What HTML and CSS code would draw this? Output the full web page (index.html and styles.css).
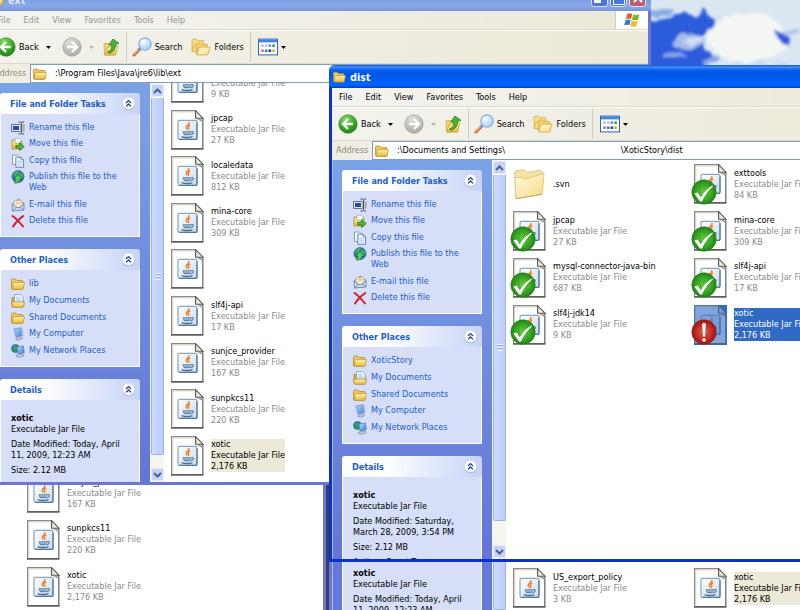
FILE: index.html
```html
<!DOCTYPE html>
<html lang="en">
<head>
<meta charset="utf-8">
<title>dist</title>
<link rel="stylesheet" href="styles.css">
</head>
<body>
<svg class="defs" aria-hidden="true">
  <defs>
    <linearGradient id="g-folder" x1="0" y1="0" x2="0" y2="1"><stop offset="0" stop-color="#fff3a8"/><stop offset="1" stop-color="#e9b93c"/></linearGradient>
    <linearGradient id="g-big" x1="0" y1="0" x2="1" y2="1"><stop offset="0" stop-color="#fffbe0"/><stop offset="1" stop-color="#f6dc84"/></linearGradient>
    <radialGradient id="g-back" cx=".4" cy=".25" r=".8"><stop offset="0" stop-color="#8fe070"/><stop offset=".5" stop-color="#3fb02c"/><stop offset="1" stop-color="#1c7d14"/></radialGradient>
    <radialGradient id="g-fwd" cx=".4" cy=".25" r=".8"><stop offset="0" stop-color="#dededc"/><stop offset="1" stop-color="#a9a9a6"/></radialGradient>
    <radialGradient id="g-ok" cx=".5" cy=".5" r=".55"><stop offset="0" stop-color="#6ecf45"/><stop offset=".6" stop-color="#38a522"/><stop offset="1" stop-color="#167a10"/></radialGradient>
    <radialGradient id="g-bad" cx=".5" cy=".5" r=".55"><stop offset="0" stop-color="#e0604a"/><stop offset=".6" stop-color="#c02a20"/><stop offset="1" stop-color="#8e1510"/></radialGradient>
    <radialGradient id="g-lens" cx=".4" cy=".35" r=".7"><stop offset="0" stop-color="#f4fbff"/><stop offset="1" stop-color="#9fccf2"/></radialGradient>
    <linearGradient id="g-java" x1="0" y1="0" x2="1" y2="1"><stop offset="0" stop-color="#ffffff"/><stop offset="1" stop-color="#c9dbe8"/></linearGradient>
    <linearGradient id="g-screen" x1="0" y1="0" x2="1" y2="1"><stop offset="0" stop-color="#bfe2ff"/><stop offset="1" stop-color="#2f7fe0"/></linearGradient>
  </defs>

  <symbol id="folder" viewBox="0 0 14 12">
    <path d="M.5 10V2.2Q.5 1 1.7 1H4.6L6 2.5H11Q12 2.5 12 3.5V10Q12 11.3 10.8 11.3H1.6Q.5 11.3.5 10Z" fill="#f0c95c" stroke="#b8902e" stroke-width=".8"/>
    <path d="M1.2 10.8 2.2 5.2Q2.4 4.4 3.2 4.4H12.6Q13.5 4.4 13.3 5.2L12.2 10.5Q12 11.3 11.2 11.3H1.7Q1.1 11.3 1.2 10.8Z" fill="url(#g-folder)" stroke="#b8902e" stroke-width=".7"/>
  </symbol>
  <symbol id="docs" viewBox="0 0 14 14">
    <path d="M1 12V3.5H4L5 5H12V12Z" fill="#e2b13a" stroke="#a67c1c" stroke-width=".7"/>
    <path d="M3.5.6H9.5L12 3V9H3.5Z" fill="#fff" stroke="#6f9ac8" stroke-width=".8"/>
    <path d="M5 3.2H9M5 5H10.5M5 6.8H10.5" stroke="#7fb0e0" stroke-width=".8"/>
    <path d="M.6 8H13.3L12.6 12.5Q12.4 13.3 11.7 13.3H2Q1.3 13.3 1.2 12.5Z" fill="url(#g-folder)" stroke="#a67c1c" stroke-width=".7"/>
  </symbol>
  <symbol id="computer" viewBox="0 0 14 14">
    <path d="M3 2 9.5.8 11 8.6 5 10Z" fill="url(#g-screen)" stroke="#6c8fc0" stroke-width=".8"/>
    <path d="M9.5.8 11.3 1.6 12 8.6 11 8.6Z" fill="#c4cede" stroke="#7d8ea8" stroke-width=".5"/>
    <path d="M5 11.2Q8 9.2 11.3 10.6V12Q8 14 5 12.8Z" fill="#c3cbe0" stroke="#7681a8" stroke-width=".6"/>
  </symbol>
  <symbol id="network" viewBox="0 0 14 14">
    <circle cx="4.5" cy="4.5" r="4" fill="#2a9a4a" stroke="#1f5a90" stroke-width=".6"/>
    <path d="M2 2.5Q4.5 1 5.5 3T3.5 6Z" fill="#3c86e0"/>
    <path d="M6 3 12.4 2 13.2 8.8 7 9.8Z" fill="url(#g-screen)" stroke="#5c7fb8" stroke-width=".8"/>
    <path d="M5.5 11.2Q9 9.2 12.8 10.6V12Q9 14 5.5 12.8Z" fill="#c3cbe0" stroke="#7681a8" stroke-width=".6"/>
  </symbol>
  <symbol id="rename" viewBox="0 0 14 14">
    <path d="M.5 3.5H9.5V10.5H.5Z" fill="#dfe7f5" stroke="#6b7280"/>
    <path d="M2 5H8V9H2Z" fill="#1f4fae"/>
    <path d="M9.4 2.5H12V11.5H9.4Z" fill="#c9ced8"/>
    <path d="M7.5 1H9.7L10.6 1.8 11.5 1H13.2M10.6 1.8V12.2M7.5 13H9.7L10.6 12.2 11.5 13H13.2" fill="none" stroke="#444b58"/>
    <path d="M12.9 3.5V10.5" stroke="#7a828f"/>
  </symbol>
  <symbol id="move" viewBox="0 0 14 14">
    <path d="M1 12V3H4.5L5.5 4.3H11V12Z" fill="url(#g-folder)" stroke="#a67c1c" stroke-width=".7"/>
    <path d="M4 1.2H8L9.8 3V6H4Z" fill="#fff" stroke="#8a93a0" stroke-width=".6"/>
    <path d="M4.8 8.4H8.6V5.8L13.2 9.6 8.6 13.4V10.9H4.8Z" fill="#4fc03a" stroke="#17701a" stroke-width=".8"/>
  </symbol>
  <symbol id="copy" viewBox="0 0 14 14">
    <path d="M1.5 1H6.5L8.5 3V10.5H1.5Z" fill="#f4faff" stroke="#6f8aa8" stroke-width=".8"/>
    <path d="M4.8 3.2H10L12.6 5.8V13.3H4.8Z" fill="#e6f3ff" stroke="#4f6f94" stroke-width=".8"/>
    <path d="M10 3.2V5.8H12.6" fill="#b8d2ec" stroke="#4f6f94" stroke-width=".6"/>
    <path d="M6.3 7.5H11M6.3 9.3H11M6.3 11.1H11" stroke="#9cc4e8" stroke-width=".7"/>
  </symbol>
  <symbol id="publish" viewBox="0 0 14 14">
    <circle cx="7" cy="6.6" r="6" fill="#2f73d0" stroke="#1c4c7c" stroke-width=".6"/>
    <path d="M2 3.5Q5 0 8 1.5L6.5 4.5 3.5 6.5ZM8.5 2.5Q12 3 12.6 6.5L10 7.5 8.3 5Z" fill="#3cb54a"/>
    <path d="M7 4.5 11.5 9H9Q9 12 5 13.4 3.2 13 2.8 12 5.5 11 5 9H2.8Z" fill="#55cf48" stroke="#146c22" stroke-width=".6"/>
  </symbol>
  <symbol id="mail" viewBox="0 0 14 14">
    <path d="M1 6 7.5 1 13 5.5V12L1.5 13Z" fill="#c9dbf3" stroke="#60789c" stroke-width=".8"/>
    <path d="M3 3 10.5 2.2 11.5 8 7 9.8 3.5 8Z" fill="#fffdf2" stroke="#b09a60" stroke-width=".6"/>
    <path d="M4.5 4.8 9.5 4.2M4.7 6.3 9.8 5.8" stroke="#e39a4a" stroke-width=".8"/>
    <path d="M1.2 6.4 7 10 13 5.8M1.5 12.8 5.6 9.2M12.9 11.8 8.6 9" fill="none" stroke="#60789c" stroke-width=".7"/>
  </symbol>
  <symbol id="delete" viewBox="0 0 14 14">
    <path d="M1.5 2Q6 5 12 12.5M12.3 2Q6 6 2 12.5" fill="none" stroke="#cf1f2c" stroke-width="2" stroke-linecap="round"/>
  </symbol>

  <symbol id="back" viewBox="0 0 20 20">
    <circle cx="10" cy="10" r="9.2" fill="url(#g-back)" stroke="#3a8a30" stroke-width=".7"/>
    <path d="M10 5 5 10 10 15M5.4 10H15" fill="none" stroke="#fff" stroke-width="2.4"/>
  </symbol>
  <symbol id="forward" viewBox="0 0 20 20">
    <circle cx="10" cy="10" r="9.2" fill="url(#g-fwd)" stroke="#a0a09c" stroke-width=".7"/>
    <path d="M10 5 15 10 10 15M14.6 10H5" fill="none" stroke="#fff" stroke-width="2.4"/>
  </symbol>
  <symbol id="up" viewBox="0 0 17 18">
    <path d="M1 5.5H5L6.5 7H14L12.5 17H1.5Z" fill="#f2d36e" stroke="#c8a240" stroke-width=".7"/>
    <path d="M1.5 17 4 9.5 15 7.5 12.5 17Z" fill="url(#g-folder)" stroke="#c8a240" stroke-width=".7"/>
    <path d="M4.5 14Q10 12.5 8.6 6.5L5.5 7 10 1 16 5.4 12.6 5.8Q13 13 6 15.5Z" fill="#46b838" stroke="#1b741a" stroke-width=".7"/>
  </symbol>
  <symbol id="search" viewBox="0 0 20 20">
    <path d="M8 12 2 18" stroke="#c4743c" stroke-width="3" stroke-linecap="round"/>
    <path d="M7.4 11.8 2 17" stroke="#f0b07a" stroke-width="1.2" stroke-linecap="round"/>
    <path d="M9 10.5 6.5 13" stroke="#7f8fd0" stroke-width="2.6"/>
    <circle cx="13" cy="7" r="6.2" fill="url(#g-lens)" stroke="#8fb0e0" stroke-width="1.2"/>
    <path d="M9.6 6.4Q10.5 3.6 13.5 3.4" stroke="#fff" stroke-width="1.3" fill="none"/>
  </symbol>
  <symbol id="folders" viewBox="0 0 19 17">
    <path d="M1 13V2.2L2 1H5L6.5 2.5H12V13Z" fill="#f8dd84" stroke="#d2ac4c" stroke-width=".8"/>
    <path d="M5 15V6L6 4.7H9L10.3 6H15.5V15.5H5.5Z" fill="#f4d06a" stroke="#d2ac4c" stroke-width=".8"/>
    <path d="M5.4 16 8 8.6H18.2L15.8 16Z" fill="url(#g-big)" stroke="#d2ac4c" stroke-width=".8"/>
    <path d="M1 13 3 6.5H5" stroke="#d2ac4c" stroke-width=".7" fill="none"/>
  </symbol>
  <symbol id="views" viewBox="0 0 19 16">
    <rect x=".5" y=".5" width="18" height="15" fill="#fff" stroke="#2f66c0"/>
    <path d="M1 1H18V3.6H1Z" fill="#3f86e4"/>
    <path d="M3 5.5H5.5V8H3ZM6.5 5.5H9V8H6.5Z" fill="#b9c4e6"/>
    <path d="M10 5.5H12.5V8H10Z" fill="#7f90d8"/><path d="M13.6 5.5H16V8H13.6Z" fill="#35a83a"/>
    <path d="M3 10.3H5.5V12.8H3Z" fill="#ee7044"/><path d="M6.5 10.3H9V12.8H6.5Z" fill="#3a78e0"/>
    <path d="M10 10.3H12.5V12.8H10Z" fill="#1e4490"/><path d="M13.6 10.3H16V12.8H13.6Z" fill="#d9a92a"/>
  </symbol>
  <symbol id="arrow" viewBox="0 0 5 3"><path d="M0 0H5L2.5 3Z" fill="currentColor"/></symbol>
  <symbol id="chevron" viewBox="0 0 15 15">
    <circle cx="7.5" cy="7.9" r="6.4" fill="#9aa9d4"/>
    <circle cx="7.5" cy="7.3" r="6.2" fill="#fff" stroke="#c4cdea" stroke-width=".6"/>
    <path d="M5 7 7.5 4.6 10 7M5 10.4 7.5 8 10 10.4" fill="none" stroke="#1e3f94" stroke-width="1.3"/>
  </symbol>
  <symbol id="sb-up" viewBox="0 0 9 6"><path d="M1 5 4.5 1.5 8 5" fill="none" stroke="#4d6185" stroke-width="2"/></symbol>
  <symbol id="sb-down" viewBox="0 0 9 6"><path d="M1 1 4.5 4.5 8 1" fill="none" stroke="#4d6185" stroke-width="2"/></symbol>
  <symbol id="flag" viewBox="0 0 18 16">
    <path d="M3.4 1.6Q6 .2 8.8 1.7L7.4 7.2Q4.8 5.8 1.9 7.2Z" fill="#ee5a24"/>
    <path d="M9.8 2.2Q12.6 3.6 16.2 2L14.8 7.8Q11.6 9 8.4 7.6Z" fill="#74b72c"/>
    <path d="M1.6 8.3Q4.4 6.9 7.1 8.3L5.7 13.6Q3.2 12.2.2 13.6Z" fill="#2f7de0"/>
    <path d="M8.1 8.8Q11.2 10.2 14.5 8.9L13.1 14.6Q9.8 15.8 6.7 14.2Z" fill="#f5bd1c"/>
  </symbol>

  <symbol id="jar" viewBox="0 0 33 40">
    <path d="M.6.6H25L32 8V38.8H.6Z" fill="#fff"/>
    <path d="M1.8 37V2H24" fill="none" stroke="#ebe9dc" stroke-width="1.4"/>
    <path d="M.6 39V.6H25" fill="none" stroke="#8a8a86" stroke-width="1.2"/>
    <path d="M31.8 8V39" fill="none" stroke="#6c6c6a" stroke-width="1.3"/>
    <path d="M0 38.9H32.4" stroke="#5e5e5c" stroke-width="1.8"/>
    <path d="M24.6.6 32 8.2H24.6Z" fill="#eceadf" stroke="#55554f" stroke-width="1.1"/>
    <path d="M25.5 8.8 31.6 9.6V12Z" fill="#9a9a92"/>
    <rect x="7" y="10.4" width="19" height="19" rx="1.6" fill="url(#g-java)" stroke="#86a6c2" stroke-width="1.2"/>
    <path d="M8.4 29.4H25.2Q26 29 26 28V12.5" fill="none" stroke="#54789a" stroke-width="1.2"/>
    <path d="M17.6 12.2Q18.6 14 16.2 15.6 14.4 17 16.2 19.4M19.2 15Q16.4 16.2 17.6 17.6 18.2 18.8 17 19.8" fill="none" stroke="#ee8433" stroke-width="1.5"/>
    <path d="M11.6 21.3H20Q20 24.6 18.2 25.2H13.4Q11.8 24.6 11.6 21.3Z" fill="#5f88ab"/>
    <path d="M20 21.8Q22.8 21.2 22.2 23 21.4 24.6 19.4 24.6" fill="none" stroke="#4f7ba2" stroke-width="1.1"/>
    <path d="M10.6 26.6Q16 28.4 21.4 26.6" fill="none" stroke="#3f6d96" stroke-width="1.4"/>
    <path d="M12.6 23H19" stroke="#dbe7f0" stroke-width=".8"/>
  </symbol>
  <symbol id="ok" viewBox="0 0 26 26">
    <circle cx="13" cy="13" r="12.2" fill="url(#g-ok)" stroke="#2a7a22" stroke-width=".6"/>
    <path d="M9 3V23M13 2V24M17 3V23" stroke="#2d961e" stroke-width=".7" opacity=".6"/>
    <path d="M3.4 14.6 6.6 13.4 9.8 18.2Q14 10.8 21.4 6.4L22 7.2Q15 13.4 11 22.4H9Z" fill="#fff"/>
  </symbol>
  <symbol id="bad" viewBox="0 0 26 26">
    <circle cx="13" cy="13" r="12.2" fill="url(#g-bad)" stroke="#8a1a14" stroke-width=".6"/>
    <path d="M11.2 5Q13 3 14.8 5L14 17.4H12Z" fill="#fff"/>
    <circle cx="13" cy="21" r="1.7" fill="#fff"/>
  </symbol>
  <symbol id="bigfolder" viewBox="0 0 33 40">
    <path d="M1.6 9 3 6.6 10.8 5.8 14 8.4 27 6.2 29 8V30L3 34.6Z" fill="#f3e2a0" stroke="#d8c078" stroke-width=".8"/>
    <path d="M3 34.6 1.8 14 8.6 13 12 15.4 30.8 9 31 10.5 29.2 30Z" fill="url(#g-big)" stroke="#dcc67e" stroke-width=".9"/>
    <path d="M3 34.8 29 30.4" stroke="#a99a66" stroke-width="1" opacity=".7"/>
  </symbol>
</svg>

<main class="desktop">
  <svg class="sky" viewBox="0 0 160 70" aria-hidden="true">
    <defs>
      <filter id="wisp" x="-20%" y="-20%" width="140%" height="140%">
        <feTurbulence type="fractalNoise" baseFrequency=".08" numOctaves="4" seed="9" result="n"/>
        <feDisplacementMap in="SourceGraphic" in2="n" scale="14" xChannelSelector="R" yChannelSelector="G"/>
        <feGaussianBlur stdDeviation="1.6"/>
      </filter>
    </defs>
    <rect width="160" height="70" fill="#dbe7f0"/>
    <g filter="url(#wisp)">
      <ellipse cx="108" cy="38" rx="40" ry="24" fill="#f4f6f4"/>
      <path d="M-20 18 16 20 36 14 56 14 64 10 76 18 74 32 60 36 64 46 70 56 58 80 -20 80Z" fill="#2a5cdc"/>
      <ellipse cx="22" cy="12" rx="12" ry="3" fill="#86a8e6"/>
      <ellipse cx="50" cy="42" rx="15" ry="8" fill="#a5bdeb"/>
      <ellipse cx="55" cy="41" rx="7" ry="4" fill="#d4e0f4"/>
      <ellipse cx="32" cy="55" rx="14" ry="3" fill="#8aa8e8"/>
      <ellipse cx="70" cy="60" rx="8" ry="3" fill="#86a4ea"/>
      <path d="M134 30 143 32 152 40 148 47 140 43Z" fill="#2a5cdc"/>
      <ellipse cx="150" cy="32" rx="6" ry="3" fill="#a9c2ee"/>
      <ellipse cx="120" cy="64" rx="30" ry="2" fill="#c5d6ee"/>
    </g>
  </svg>

  <section class="window inactive under-left" aria-label="ext files">
    <ul class="tiles">
      <li class="tile"><svg class="file"><use href="#jar"/></svg><p><b>sunjce_provider</b><br>Executable Jar File<br>167 KB</p></li>
      <li class="tile"><svg class="file"><use href="#jar"/></svg><p><b>sunpkcs11</b><br>Executable Jar File<br>220 KB</p></li>
      <li class="tile"><svg class="file"><use href="#jar"/></svg><p><b>xotic</b><br>Executable Jar File<br>2,176 KB</p></li>
    </ul>
  </section>

  <section class="window inactive under-right" aria-label="security files">
    <div class="content">
      <div class="taskpane">
        <div class="details">
          <p><strong>xotic</strong><br>Executable Jar File</p>
          <p>Date Modified: Today, April 11, 2009, 12:23 AM</p>
        </div>
      </div>
      <div class="scrollbar"><div class="thumb"></div></div>
      <ul class="tiles">
        <li class="tile"><svg class="file"><use href="#jar"/></svg><p><b>US_export_policy</b><br>Executable Jar File<br>3 KB</p></li>
        <li class="tile marked"><svg class="file"><use href="#jar"/></svg><p><b>xotic</b><br>Executable Jar File<br>2,176 KB</p></li>
      </ul>
    </div>
  </section>

  <section class="window inactive ext" aria-label="ext">
    <header class="titlebar">
      <svg class="i12"><use href="#folder"/></svg><h1>ext</h1>
      <div class="caption">
        <button type="button" class="min" aria-label="Minimize"></button>
        <button type="button" class="max" aria-label="Maximize"></button>
        <button type="button" class="close" aria-label="Close"><svg viewBox="0 0 10 10"><path d="M1 1 9 9M9 1 1 9" stroke="#fff" stroke-width="2"/></svg></button>
      </div>
    </header>
    <nav class="menubar">
      <button type="button">File</button><button type="button">Edit</button><button type="button">View</button><button type="button">Favorites</button><button type="button">Tools</button><button type="button">Help</button>
      <span class="brand"><svg><use href="#flag"/></svg></span>
    </nav>
    <div class="toolbar">
      <button type="button" class="t-back"><svg class="i19"><use href="#back"/></svg>Back<svg class="drop"><use href="#arrow"/></svg></button>
      <button type="button" class="t-fwd" aria-label="Forward"><svg class="i19"><use href="#forward"/></svg><svg class="drop"><use href="#arrow"/></svg></button>
      <button type="button" class="t-up" aria-label="Up"><svg><use href="#up"/></svg></button>
      <span class="sep"></span>
      <button type="button" class="t-search"><svg class="i19"><use href="#search"/></svg>Search</button>
      <button type="button" class="t-folders"><svg class="i19"><use href="#folders"/></svg>Folders</button>
      <span class="sep"></span>
      <button type="button" class="t-views" aria-label="Views"><svg class="i19"><use href="#views"/></svg><svg class="drop"><use href="#arrow"/></svg></button>
    </div>
    <div class="addressbar">
      <label for="path-ext">Address</label>
      <div class="field"><svg class="i14"><use href="#folder"/></svg><input id="path-ext" type="text" value=":\Program Files\Java\jre6\lib\ext"></div>
    </div>
    <div class="content">
      <div class="taskpane">
        <section class="panel">
          <h2>File and Folder Tasks<svg><use href="#chevron"/></svg></h2>
          <ul class="links tasks">
            <li><svg class="i14"><use href="#rename"/></svg><a href="#">Rename this file</a></li>
            <li><svg class="i14"><use href="#move"/></svg><a href="#">Move this file</a></li>
            <li><svg class="i14"><use href="#copy"/></svg><a href="#">Copy this file</a></li>
            <li><svg class="i14"><use href="#publish"/></svg><a href="#">Publish this file to the Web</a></li>
            <li><svg class="i14"><use href="#mail"/></svg><a href="#">E-mail this file</a></li>
            <li><svg class="i14"><use href="#delete"/></svg><a href="#">Delete this file</a></li>
          </ul>
        </section>
        <section class="panel">
          <h2>Other Places<svg><use href="#chevron"/></svg></h2>
          <ul class="links places">
            <li><svg class="i14"><use href="#folder"/></svg><a href="#">lib</a></li>
            <li><svg class="i14"><use href="#docs"/></svg><a href="#">My Documents</a></li>
            <li><svg class="i14"><use href="#folder"/></svg><a href="#">Shared Documents</a></li>
            <li><svg class="i14"><use href="#computer"/></svg><a href="#">My Computer</a></li>
            <li><svg class="i14"><use href="#network"/></svg><a href="#">My Network Places</a></li>
          </ul>
        </section>
        <section class="panel">
          <h2>Details<svg><use href="#chevron"/></svg></h2>
          <div class="details">
            <p><strong>xotic</strong><br>Executable Jar File</p>
            <p>Date Modified: Today, April 11, 2009, 12:23 AM</p>
            <p>Size: 2.12 MB</p>
          </div>
        </section>
      </div>
      <div class="scrollbar">
        <button type="button" aria-label="Scroll up"><svg><use href="#sb-up"/></svg></button>
        <div class="thumb"><i></i></div>
        <button type="button" aria-label="Scroll down"><svg><use href="#sb-down"/></svg></button>
      </div>
      <ul class="tiles">
        <li class="tile"><svg class="file"><use href="#jar"/></svg><p><br>Executable Jar File<br>9 KB</p></li>
        <li class="tile"><svg class="file"><use href="#jar"/></svg><p><b>jpcap</b><br>Executable Jar File<br>27 KB</p></li>
        <li class="tile"><svg class="file"><use href="#jar"/></svg><p><b>localedata</b><br>Executable Jar File<br>812 KB</p></li>
        <li class="tile"><svg class="file"><use href="#jar"/></svg><p><b>mina-core</b><br>Executable Jar File<br>309 KB</p></li>
        <li class="tile"><svg class="file"><use href="#jar"/></svg></li>
        <li class="tile"><svg class="file"><use href="#jar"/></svg><p><b>slf4j-api</b><br>Executable Jar File<br>17 KB</p></li>
        <li class="tile"><svg class="file"><use href="#jar"/></svg><p><b>sunjce_provider</b><br>Executable Jar File<br>167 KB</p></li>
        <li class="tile"><svg class="file"><use href="#jar"/></svg><p><b>sunpkcs11</b><br>Executable Jar File<br>220 KB</p></li>
        <li class="tile marked"><svg class="file"><use href="#jar"/></svg><p><b>xotic</b><br>Executable Jar File<br>2,176 KB</p></li>
      </ul>
    </div>
  </section>

  <section class="window dist" aria-label="dist">
    <header class="titlebar"><svg class="i12"><use href="#folder"/></svg><h1>dist</h1></header>
    <nav class="menubar">
      <button type="button">File</button><button type="button">Edit</button><button type="button">View</button><button type="button">Favorites</button><button type="button">Tools</button><button type="button">Help</button>
    </nav>
    <div class="toolbar">
      <button type="button" class="t-back"><svg class="i19"><use href="#back"/></svg>Back<svg class="drop"><use href="#arrow"/></svg></button>
      <button type="button" class="t-fwd" aria-label="Forward"><svg class="i19"><use href="#forward"/></svg><svg class="drop"><use href="#arrow"/></svg></button>
      <button type="button" class="t-up" aria-label="Up"><svg><use href="#up"/></svg></button>
      <span class="sep"></span>
      <button type="button" class="t-search"><svg class="i19"><use href="#search"/></svg>Search</button>
      <button type="button" class="t-folders"><svg class="i19"><use href="#folders"/></svg>Folders</button>
      <span class="sep"></span>
      <button type="button" class="t-views" aria-label="Views"><svg class="i19"><use href="#views"/></svg><svg class="drop"><use href="#arrow"/></svg></button>
    </div>
    <div class="addressbar">
      <label for="path-dist">Address</label>
      <div class="field"><svg class="i14"><use href="#folder"/></svg><input id="path-dist" type="text" value=":\Documents and Settings\                                             \XoticStory\dist"></div>
    </div>
    <div class="content">
      <div class="taskpane">
        <section class="panel">
          <h2>File and Folder Tasks<svg><use href="#chevron"/></svg></h2>
          <ul class="links tasks">
            <li><svg class="i14"><use href="#rename"/></svg><a href="#">Rename this file</a></li>
            <li><svg class="i14"><use href="#move"/></svg><a href="#">Move this file</a></li>
            <li><svg class="i14"><use href="#copy"/></svg><a href="#">Copy this file</a></li>
            <li><svg class="i14"><use href="#publish"/></svg><a href="#">Publish this file to the Web</a></li>
            <li><svg class="i14"><use href="#mail"/></svg><a href="#">E-mail this file</a></li>
            <li><svg class="i14"><use href="#delete"/></svg><a href="#">Delete this file</a></li>
          </ul>
        </section>
        <section class="panel">
          <h2>Other Places<svg><use href="#chevron"/></svg></h2>
          <ul class="links places">
            <li><svg class="i14"><use href="#folder"/></svg><a href="#">XoticStory</a></li>
            <li><svg class="i14"><use href="#docs"/></svg><a href="#">My Documents</a></li>
            <li><svg class="i14"><use href="#folder"/></svg><a href="#">Shared Documents</a></li>
            <li><svg class="i14"><use href="#computer"/></svg><a href="#">My Computer</a></li>
            <li><svg class="i14"><use href="#network"/></svg><a href="#">My Network Places</a></li>
          </ul>
        </section>
        <section class="panel">
          <h2>Details<svg><use href="#chevron"/></svg></h2>
          <div class="details">
            <p><strong>xotic</strong><br>Executable Jar File</p>
            <p>Date Modified: Saturday, March 28, 2009, 3:54 PM</p>
            <p>Size: 2.12 MB</p>
            <p>Author: Guest-Tux</p>
          </div>
        </section>
      </div>
      <div class="scrollbar">
        <button type="button" aria-label="Scroll up"><svg><use href="#sb-up"/></svg></button>
        <div class="thumb"><i></i></div>
        <button type="button" aria-label="Scroll down"><svg><use href="#sb-down"/></svg></button>
      </div>
      <ul class="tiles">
        <li class="tile"><svg class="file"><use href="#bigfolder"/></svg><p><b>.svn</b></p></li>
        <li class="tile"><svg class="file"><use href="#jar"/></svg><svg class="badge"><use href="#ok"/></svg><p><b>exttools</b><br>Executable Jar File<br>84 KB</p></li>
        <li class="tile"><svg class="file"><use href="#jar"/></svg><svg class="badge"><use href="#ok"/></svg><p><b>jpcap</b><br>Executable Jar File<br>27 KB</p></li>
        <li class="tile"><svg class="file"><use href="#jar"/></svg><svg class="badge"><use href="#ok"/></svg><p><b>mina-core</b><br>Executable Jar File<br>309 KB</p></li>
        <li class="tile"><svg class="file"><use href="#jar"/></svg><svg class="badge"><use href="#ok"/></svg><p><b>mysql-connector-java-bin</b><br>Executable Jar File<br>687 KB</p></li>
        <li class="tile"><svg class="file"><use href="#jar"/></svg><svg class="badge"><use href="#ok"/></svg><p><b>slf4j-api</b><br>Executable Jar File<br>17 KB</p></li>
        <li class="tile"><svg class="file"><use href="#jar"/></svg><svg class="badge"><use href="#ok"/></svg><p><b>slf4j-jdk14</b><br>Executable Jar File<br>9 KB</p></li>
        <li class="tile selected"><svg class="file"><use href="#jar"/></svg><svg class="badge"><use href="#bad"/></svg><p><b>xotic</b><br>Executable Jar File<br>2,176 KB</p></li>
      </ul>
    </div>
  </section>
</main>
</body>
</html>
```

FILE: styles.css
```css
* { box-sizing: border-box; }

body {
  margin: 0;
  font: 9px/11px "DejaVu Sans Condensed", "DejaVu Sans", sans-serif;
  color: #000;
}

h1, h2, p, ul { margin: 0; padding: 0; }
ul { list-style: none; }
svg { display: block; flex: none; }
button {
  display: flex;
  align-items: center;
  margin: 0;
  padding: 0;
  border: 0;
  background: none;
  color: inherit;
  font: inherit;
}

.defs { position: absolute; width: 0; height: 0; }
.i12 { width: 13px; height: 12px; }
.i14 { width: 14px; height: 14px; }
.i19 { width: 20px; height: 20px; }
.drop { width: 5px; height: 3px; }

.desktop {
  position: relative;
  min-height: 100vh;
  overflow: hidden;
  background: #3c3f52;
}
.sky { position: absolute; top: 0; right: 0; width: 160px; height: 70px; }

/* Windows */
.window {
  position: absolute;
  display: flex;
  flex-direction: column;
  border: 3px solid #0a3fd6;
  border-top: 0;
  border-left-color: #0831d9;
  border-bottom-color: #0a32c4;
  background: #fff;
}
.dist { top: 65px; left: 329px; right: -120px; border-radius: 6px 6px 0 0; }
.ext { top: -12px; left: -13px; width: 664px; }
.inactive { border-color: #6a75d8; }
.under-left { top: 467px; left: -6px; width: 332px; padding-left: 30px; }
.under-right { top: 555px; left: 329px; right: -120px; }

.titlebar {
  display: flex;
  align-items: center;
  gap: 4px;
  height: 23px;
  margin: 0 -3px;
  padding: 1px 5px 0 4px;
  border-radius: 6px 6px 0 0;
  background: linear-gradient(#1a4fc8 0, #3f90ff 2px, #0a5ff0 5px, #0054e3 9px, #0061fc 17px, #0066ff 20px, #003dc4 23px);
  color: #fff;
}
.titlebar h1 { font: bold 11px/14px "Noto Sans", sans-serif; }
.inactive .titlebar { background: linear-gradient(#8fabea, #7b98e0 8px, #86aaea 18px, #7c92dc); color: #dfe7fa; }
.caption { display: flex; gap: 2px; margin: 0 0 4px auto; }
.caption button {
  justify-content: center;
  width: 17px;
  height: 17px;
  border: 1px solid #d5defa;
  border-radius: 3px;
  background: #4a74e0;
}
.caption .min::before { content: ""; width: 7px; height: 3px; margin: 7px 4px 0 0; background: #fff; }
.caption .max::before { content: ""; width: 10px; height: 10px; border: 1px solid #fff; border-top-width: 2px; }
.caption .close { background: #b8616e; }
.caption svg { width: 10px; height: 10px; }

.menubar {
  display: flex;
  gap: 13px;
  height: 19px;
  padding-left: 7px;
  border-bottom: 1px solid #dcd9c8;
  background: linear-gradient(to right, #f3f3f1, #ece9d8);
}
.inactive .menubar { color: #98968a; }
.brand {
  display: flex;
  align-items: center;
  justify-content: center;
  width: 33px;
  margin-left: auto;
  border-left: 1px solid #d0cdbc;
  background: #fff;
}
.brand svg { width: 17px; height: 16px; }

.toolbar {
  display: flex;
  align-items: center;
  height: 34px;
  padding-left: 6px;
  border-top: 1px solid #fff;
  border-bottom: 1px solid #dcd9c8;
  background: linear-gradient(to right, #f3f2ec, #ece9d8);
}
.t-back { gap: 3px; }
.t-back .drop { margin-left: 4px; }
.t-fwd { gap: 7px; margin-left: 11px; }
.t-fwd .drop { color: #b8b6aa; }
.t-up { margin-left: 9px; }
.t-up svg { width: 17px; height: 18px; }
.sep { width: 1px; height: 30px; margin: 0 5px 0 6px; background: #d0cdbc; }
.t-search, .t-folders { gap: 3px; }
.t-folders { margin-left: 9px; }
.t-views { gap: 3px; margin-left: 2px; }

.addressbar {
  display: flex;
  align-items: stretch;
  height: 19px;
  background: #f0eee4;
}
.addressbar label { width: 40px; padding-left: 4px; line-height: 19px; color: #8b897e; }
.field {
  display: flex;
  align-items: center;
  flex: 1;
  gap: 8px;
  padding-left: 2px;
  border: 1px solid #7f9db9;
  background: #fff;
}
.field input {
  flex: 1;
  min-width: 0;
  padding: 0;
  border: 0;
  outline: 0;
  background: none;
  color: #000;
  font: inherit;
}

/* Content area */
.content { display: flex; height: 399px; overflow: hidden; }
.taskpane {
  display: flex;
  flex-direction: column;
  flex: none;
  gap: 12px;
  width: 160px;
  padding: 10px 10px 0 9px;
  border-left: 1px solid #a9bdf0;
  background: linear-gradient(#7ba2e7, #6375d6);
}
.panel { flex: none; }
.panel h2 {
  display: flex;
  align-items: center;
  justify-content: space-between;
  height: 21px;
  padding: 1px 4px 0 10px;
  border-radius: 3px 3px 0 0;
  background: linear-gradient(to right, #fff 30%, #c6d3f7);
  color: #215dc6;
  font: inherit;
  font-weight: bold;
}
.panel h2 svg { width: 15px; height: 15px; margin-top: -2px; }
.links, .details { border: 1px solid #fff; border-top: 0; background: #d6dff7; }
.links {
  display: grid;
  align-content: space-between;
  padding: 8px 20px 10px 10px;
}
.tasks { height: 123px; }
.places { height: 97px; }
.links li { display: flex; gap: 4px; }
.links svg { margin: -1px 0 -2px; }
.links a { color: #215dc6; text-decoration: none; }
.details { display: grid; gap: 4px; padding: 13px 10px 20px; }
.panel:last-child .details { height: 200px; align-content: start; }

.scrollbar {
  display: flex;
  flex-direction: column;
  flex: none;
  width: 14px;
  padding: 1px 0 1px 1px;
  background: #f6f5f0;
}
.scrollbar button {
  justify-content: center;
  height: 13px;
  border: 1px solid #e4ecfe;
  border-radius: 2px;
  background: #c3d3fd;
}
.scrollbar button svg { width: 9px; height: 6px; }
.thumb {
  display: flex;
  align-items: center;
  justify-content: center;
  height: 347px;
  border: 1px solid #98b4ea;
  border-top-color: #fff;
  border-radius: 2px;
  background: linear-gradient(to right, #cbdafe, #bccdfb);
}
.ext .thumb { height: 358px; }
.thumb i { width: 6px; height: 7px; background: repeating-linear-gradient(#eef3ff 0 1px, #9ab2ee 1px 2px, transparent 2px 3px); }
.scrollbar button:last-child { margin-top: auto; }

/* File tiles */
.tiles {
  display: grid;
  grid-template-columns: repeat(auto-fill, 181px);
  grid-auto-rows: 1fr;
  flex: 1;
  padding: 0 0 0 7px;
}
.ext .tiles { align-self: flex-end; grid-template-columns: 181px; height: 422px; margin-top: -30px; padding-bottom: 3px; }
.dist .tiles { height: 187px; margin-top: 1px; }
.under-left .tiles { flex: none; height: 140px; padding: 0; margin-top: 3px; }
.tile { position: relative; display: flex; align-items: center; gap: 7px; }
.file { width: 33px; height: 40px; }
.tile p { color: #8a8a8a; white-space: nowrap; }
.tile b { color: #000; font-weight: normal; }
.badge { position: absolute; left: -3px; bottom: 3px; width: 26px; height: 26px; }
.marked p { background: #ece9d8; color: #000; }
.selected p { background: #316ac5; color: #fff; }
.selected b { color: #fff; }
.selected .file { background: #316ac5; }
.selected .file use { opacity: .4; }

.under-right .content { height: 66px; }
.under-right .taskpane { padding-top: 0; background: #6577d8; }
.under-right .details { padding: 13px 10px; }
.under-right .thumb { height: 54px; }
.under-right .tiles { align-content: center; }
```
